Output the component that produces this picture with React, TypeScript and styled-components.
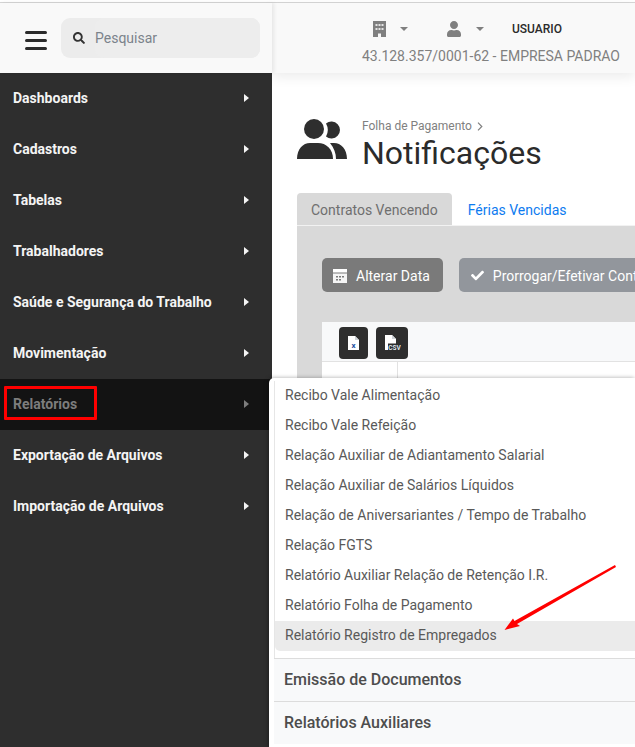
import styled, { createGlobalStyle } from "styled-components";
import { FaCheck, FaSearch, FaUser } from "react-icons/fa";

const GlobalStyle = createGlobalStyle`
    html, body {
        margin: 0;
        height: 100%;
        background: #fff;
        font-family: Roboto, "Liberation Sans", sans-serif;
        overflow: hidden;
    }
`;

const Page = styled.div`
    position: relative;
    width: 635px;
    height: 747px;
    overflow: hidden;
    display: flex;
    flex-direction: column;
`;
const TopRule = styled.div`
    height: 2px;
    flex: none;
    background: #fff;
    border-bottom: 1px solid #d6d6d6;
`;
const Body = styled.div`
    flex: 1;
    min-height: 0;
    display: flex;
`;

const Sidebar = styled.aside`
    width: 272px;
    flex: none;
    background: #2e2e2e;
    display: flex;
    flex-direction: column;
    position: relative;
    z-index: 2;
`;
const Brand = styled.div`
    height: 70px;
    background: #f9f9f9;
    display: flex;
    align-items: center;
    padding-left: 25px;
    gap: 14px;
    box-shadow: 2px 0 4px rgba(0, 0, 0, 0.08);
`;
const Burger = styled.div`
    width: 22px;
    margin-top: 5px;
    display: flex;
    flex-direction: column;
    gap: 5px;
    span {
        display: block;
        height: 3px;
        border-radius: 2px;
        background: #2b2b2b;
    }
`;
const Search = styled.div`
    width: 199px;
    height: 40px;
    border-radius: 9px;
    background: #ececec;
    display: flex;
    align-items: center;
    padding-left: 12px;
    box-sizing: border-box;
    gap: 10px;
    color: #333;
`;
const SearchInput = styled.div`
    flex: 1;
    height: 100%;
    display: flex;
    align-items: center;
    border-radius: 9px;
    background: #ededed;
    font-size: 14px;
    color: #7b838b;
`;
const NavRow = styled.div<{ $active?: boolean }>`
    height: 51px;
    display: flex;
    align-items: center;
    justify-content: space-between;
    padding: 0 23px 2px 13px;
    box-sizing: border-box;
    font-size: 14px;
    font-weight: 700;
    color: ${(p) => (p.$active ? "#7d7d7d" : "#f4f4f4")};
    background: ${(p) => (p.$active ? "#131313" : "transparent")};
`;
const Caret = styled.i<{ $active?: boolean }>`
    width: 0;
    height: 0;
    border-left: 5px solid ${(p) => (p.$active ? "#7d7d7d" : "#f4f4f4")};
    border-top: 4.5px solid transparent;
    border-bottom: 4.5px solid transparent;
`;

const Main = styled.main`
    flex: 1;
    min-width: 0;
    display: flex;
    flex-direction: column;
`;
const Header = styled.header`
    height: 70px;
    flex: none;
    background: #f9f9f9;
    box-shadow: 0 4px 12px rgba(0, 0, 0, 0.08);
    display: flex;
    flex-direction: column;
    align-items: flex-end;
    padding: 14px 15px 0 0;
    box-sizing: border-box;
`;
const HeaderIcons = styled.div`
    display: flex;
    align-items: center;
    color: #808080;
    width: 248px;
    height: 24px;
    padding-left: 1px;
    box-sizing: border-box;
`;
const DownCaret = styled.i`
    width: 0;
    height: 0;
    margin-left: 14px;
    border-top: 4px solid #808080;
    border-left: 4px solid transparent;
    border-right: 4px solid transparent;
`;
const UserGlyph = styled(FaUser)`
    margin-left: 38px;
`;
const UserName = styled.span`
    margin-left: 28px;
    font-size: 12px;
    font-weight: 500;
    color: #2b2b2b;
`;
const Company = styled.div`
    margin-top: 7px;
    font-size: 14px;
    color: #808080;
    white-space: nowrap;
`;
const Content = styled.div`
    flex: 1;
    padding: 45px 0 0 25px;
    display: flex;
    flex-direction: column;
`;
const TitleBlock = styled.div`
    display: flex;
    align-items: flex-start;
    gap: 15px;
    height: 75px;
`;
const PeopleIcon = styled.svg`
    flex: none;
    color: #2e2e2e;
`;
const Crumb = styled.div`
    display: flex;
    align-items: center;
    gap: 5px;
    font-size: 12px;
    color: #808080;
    line-height: 14px;
    margin-top: 1px;
`;
const Title = styled.h1`
    margin: 0;
    font-size: 32px;
    line-height: 40px;
    font-weight: 400;
    color: #2b2b2b;
`;
const Tabs = styled.div`
    display: flex;
    height: 32px;
    font-size: 14px;
`;
const Tab = styled.div<{ $active?: boolean }>`
    display: flex;
    align-items: center;
    padding: 2px 14px 0;
    border-radius: 4px 4px 0 0;
    background: ${(p) => (p.$active ? "#d9d9d9" : "transparent")};
    color: ${(p) => (p.$active ? "#6f6f6f" : "#0d7bf0")};
    padding-left: ${(p) => (p.$active ? "14px" : "16px")};
`;
const Panel = styled.section`
    flex: 1;
    background: #d9d9d9;
    border-top: 1px solid #f2f2f2;
    padding: 32px 0 0 25px;
`;
const ButtonRow = styled.div`
    display: flex;
    gap: 16px;
`;
const ActionButton = styled.div<{ $tone: string; $inset: number }>`
    height: 34px;
    display: flex;
    align-items: center;
    gap: 9px;
    padding: 1px 13px 0 ${(p) => p.$inset}px;
    box-sizing: border-box;
    border-radius: 5px;
    background: ${(p) => p.$tone};
    color: #fff;
    font-size: 14px;
    white-space: nowrap;
    flex: none;
`;
const Table = styled.div`
    margin-top: 30px;
    background: #fff;
    height: 120px;
`;
const TableTools = styled.div`
    height: 40px;
    background: #f8f9fa;
    border-bottom: 1px solid #e2e2e2;
    display: flex;
    align-items: center;
    gap: 8px;
    padding: 2px 0 0 17px;
    box-sizing: border-box;
`;
const ExportButton = styled.div<{ $wide?: boolean }>`
    width: ${(p) => (p.$wide ? "32px" : "29px")};
    height: 32px;
    border-radius: 4px;
    background: #2e2e2e;
    display: flex;
    align-items: center;
    justify-content: center;
`;
const TableCell = styled.div`
    width: 75px;
    height: 60px;
    border-right: 1px solid #e2e2e2;
`;

const Flyout = styled.div`
    position: absolute;
    z-index: 3;
    left: 269px;
    top: 378px;
    right: 0;
    bottom: 0;
    background: #fff;
    border-radius: 5px 0 0 0;
    box-shadow: -1px 0 4px rgba(0, 0, 0, 0.35);
    padding: 3px 0 0 5px;
    box-sizing: border-box;
`;
const ItemList = styled.div`
    border-left: 1px solid #e6e6e6;
    padding-bottom: 7px;
`;
const Item = styled.div<{ $hover?: boolean }>`
    height: 30px;
    display: flex;
    align-items: center;
    padding: 0 0 2px 10px;
    box-sizing: border-box;
    font-size: 14px;
    color: #595959;
    white-space: nowrap;
    background: ${(p) => (p.$hover ? "#ebebeb" : "transparent")};
    border-radius: ${(p) => (p.$hover ? "0 0 0 5px" : "0")};
`;
const Group = styled.div`
    height: 43px;
    display: flex;
    align-items: center;
    padding: 0 0 2px 10px;
    box-sizing: border-box;
    background: #f8f9fa;
    border-top: 1px solid #dcdcdc;
    font-size: 16px;
    font-weight: 500;
    color: #4d4d4d;
`;

const RedBox = styled.div`
    position: absolute;
    z-index: 4;
    left: 4px;
    top: 386px;
    width: 93px;
    height: 34px;
    box-sizing: border-box;
    border: 3px solid #f00;
    border-radius: 1px;
`;
const Arrow = styled.svg`
    position: absolute;
    z-index: 4;
    left: 0;
    top: 0;
    pointer-events: none;
`;

const menu = [
    "Dashboards",
    "Cadastros",
    "Tabelas",
    "Trabalhadores",
    "Saúde e Segurança do Trabalho",
    "Movimentação",
    "Relatórios",
    "Exportação de Arquivos",
    "Importação de Arquivos",
];

const reports = [
    "Recibo Vale Alimentação",
    "Recibo Vale Refeição",
    "Relação Auxiliar de Adiantamento Salarial",
    "Relação Auxiliar de Salários Líquidos",
    "Relação de Aniversariantes / Tempo de Trabalho",
    "Relação FGTS",
    "Relatório Auxiliar Relação de Retenção I.R.",
    "Relatório Folha de Pagamento",
    "Relatório Registro de Empregados",
];

function BuildingIcon() {
    return (
        <svg width="13" height="16" viewBox="0 0 13 16">
            <path d="M0 0h13v16H8v-3.5H5V16H0z" fill="#808080" />
            <path d="M2.5 3h2v2h-2zM5.5 3h2v2h-2zM8.5 3h2v2h-2zM2.5 7h2v2h-2zM5.5 7h2v2h-2zM8.5 7h2v2h-2z" fill="#e4e4e4" />
        </svg>
    );
}

function PeopleGlyph() {
    return (
        <PeopleIcon width="50" height="42" viewBox="0 0 50 42" fill="currentColor">
            <circle cx="17" cy="11" r="10" />
            <path d="M0 41C0 31 6 25 13 25h8c8 0 15 6 15 16z" />
            <path d="M29 5.5A8.5 8.5 0 1 1 29 18.5A13.2 13.2 0 0 0 29 5.5z" />
            <path d="M33 25h4c7 0 13 6 13 16H39c0-6-2-11-6-16z" />
        </PeopleIcon>
    );
}

function CalendarGlyph() {
    return (
        <svg width="14" height="14" viewBox="0 0 14 14">
            <rect y="0" width="14" height="3.5" fill="#fff" />
            <rect y="4.5" width="14" height="9.5" fill="#fff" opacity="0.92" />
            <path d="M3 7h2v1.5H3zM6 7h2v1.5H6zM9 7h2v1.5H9zM3 10h2v1.5H3zM6 10h2v1.5H6z" fill="#7a7a7a" />
        </svg>
    );
}

function ExcelGlyph() {
    return (
        <svg width="11" height="14" viewBox="0 0 11 14">
            <path d="M0 0h7l4 4v10H0z" fill="#fff" />
            <path d="M7 0l4 4H7z" fill="#cfd3d8" />
            <text x="5.5" y="12" textAnchor="middle" fontSize="8" fontWeight="700" fontFamily="Roboto, sans-serif" fill="#1f4fa0">
                x
            </text>
        </svg>
    );
}

function CsvGlyph() {
    return (
        <svg width="17" height="15" viewBox="0 0 17 15">
            <path d="M1 0h7l4 4v11H1z" fill="#fff" />
            <path d="M8 0l4 4H8z" fill="#cfd3d8" />
            <rect x="4" y="8.5" width="13" height="6.5" fill="#2e2e2e" />
            <text x="10.5" y="14.5" textAnchor="middle" fontSize="6.5" fontWeight="700" fontFamily="Roboto, sans-serif" fill="#dfe6ee">
                CSV
            </text>
        </svg>
    );
}

function App() {
    return (
        <Page>
            <GlobalStyle />
            <TopRule />
            <Body>
                <Sidebar>
                    <Brand>
                        <Burger>
                            <span />
                            <span />
                            <span />
                        </Burger>
                        <Search>
                            <FaSearch size={12} />
                            <SearchInput>Pesquisar</SearchInput>
                        </Search>
                    </Brand>
                    {menu.map((label) => (
                        <NavRow key={label} $active={label === "Relatórios"}>
                            {label}
                            <Caret $active={label === "Relatórios"} />
                        </NavRow>
                    ))}
                </Sidebar>
                <Main>
                    <Header>
                        <HeaderIcons>
                            <BuildingIcon />
                            <DownCaret />
                            <UserGlyph size={16} />
                            <DownCaret />
                            <UserName>USUARIO</UserName>
                        </HeaderIcons>
                        <Company>43.128.357/0001-62 - EMPRESA PADRAO</Company>
                    </Header>
                    <Content>
                        <TitleBlock>
                            <PeopleGlyph />
                            <div>
                                <Crumb>
                                    Folha de Pagamento
                                    <svg width="6" height="9" viewBox="0 0 6 9">
                                        <path d="M1 .7 4.8 4.5 1 8.3" fill="none" stroke="#808080" strokeWidth="1.2" />
                                    </svg>
                                </Crumb>
                                <Title>Notificações</Title>
                            </div>
                        </TitleBlock>
                        <Tabs>
                            <Tab $active>Contratos Vencendo</Tab>
                            <Tab>Férias Vencidas</Tab>
                        </Tabs>
                        <Panel>
                            <ButtonRow>
                                <ActionButton $tone="#7a7a7a" $inset={11}>
                                    <CalendarGlyph />
                                    Alterar Data
                                </ActionButton>
                                <ActionButton $tone="#92969c" $inset={12}>
                                    <FaCheck size={13} />
                                    Prorrogar/Efetivar Contrato
                                </ActionButton>
                            </ButtonRow>
                            <Table>
                                <TableTools>
                                    <ExportButton>
                                        <ExcelGlyph />
                                    </ExportButton>
                                    <ExportButton $wide>
                                        <CsvGlyph />
                                    </ExportButton>
                                </TableTools>
                                <TableCell />
                            </Table>
                        </Panel>
                    </Content>
                </Main>
            </Body>
            <Flyout>
                <ItemList>
                    {reports.map((label) => (
                        <Item key={label} $hover={label === "Relatório Registro de Empregados"}>
                            {label}
                        </Item>
                    ))}
                </ItemList>
                <Group>Emissão de Documentos</Group>
                <Group>Relatórios Auxiliares</Group>
            </Flyout>
            <RedBox />
            <Arrow width="635" height="747" viewBox="0 0 635 747">
                <polygon
                    points="504.5,630 513,618.5 514.5,621 615,565 616,567 517,624 520,626"
                    fill="#f00"
                />
            </Arrow>
        </Page>
    );
}

export default App;
